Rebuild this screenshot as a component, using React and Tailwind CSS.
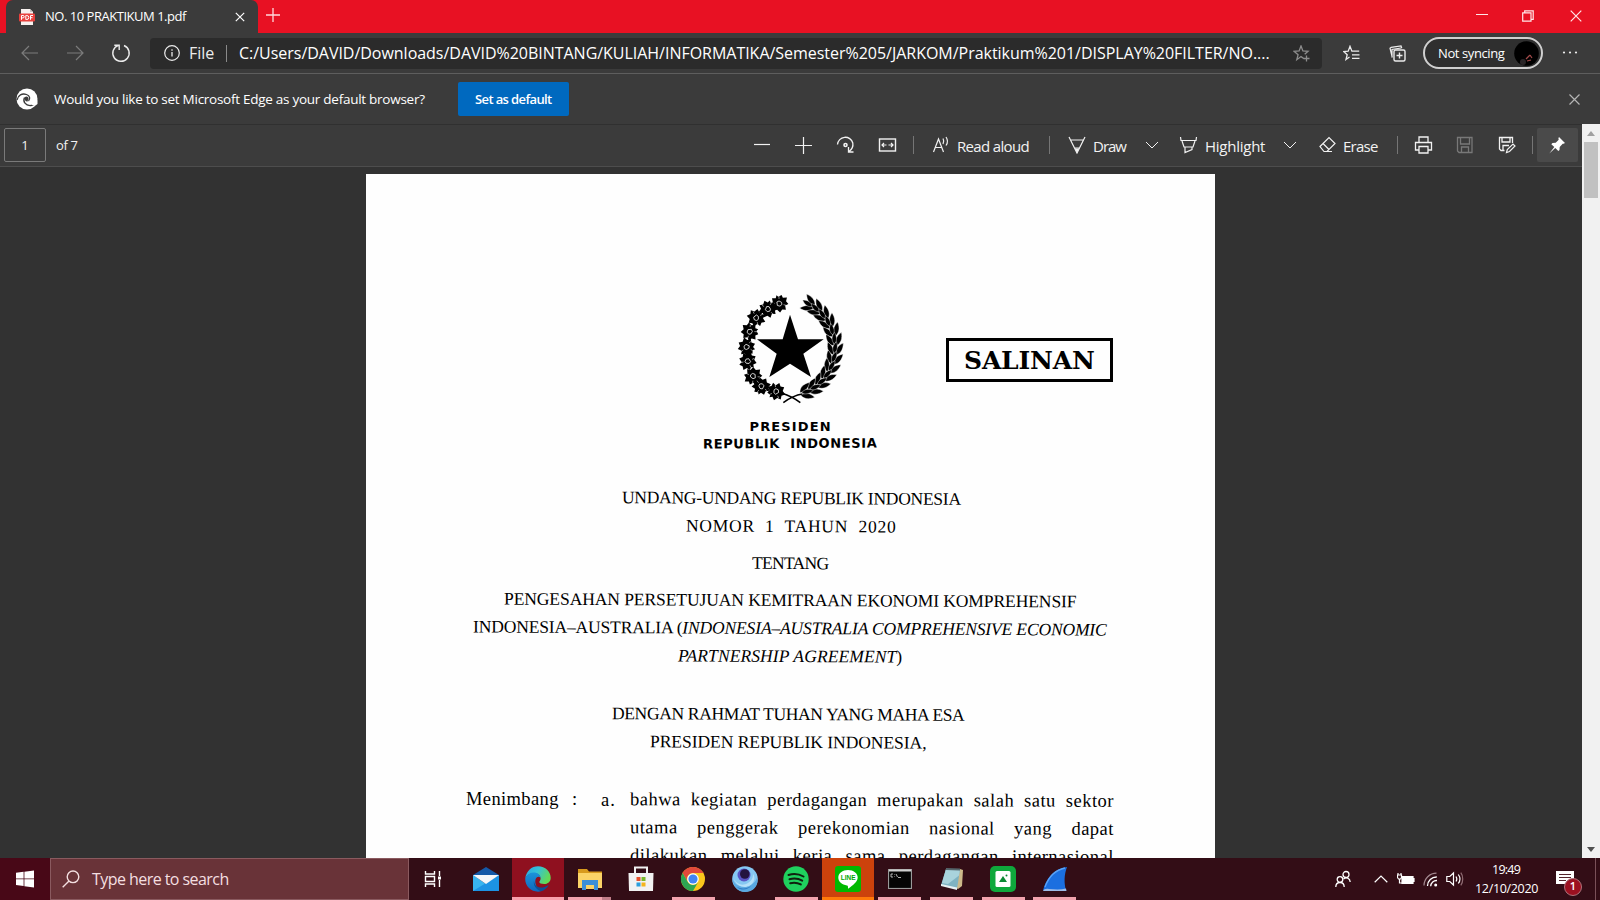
import { useLayoutEffect, useRef, useState } from "react";

const UI = "font-['Open_Sans','Noto_Sans',sans-serif]";
const SERIF = "font-['Liberation_Serif',serif]";

/* One line of text whose letter spacing is adjusted to fill the width of its box. */
function Fit({ className = "", children }) {
  const box = useRef(null);
  const text = useRef(null);
  const [spacing, setSpacing] = useState(0);
  useLayoutEffect(() => {
    const n = text.current.textContent.length;
    setSpacing((box.current.offsetWidth - text.current.offsetWidth) / Math.max(1, n - 1));
  }, []);
  return (
    <div ref={box} className={`shrink-0 whitespace-pre ${className}`}>
      <span ref={text} className="inline-block" style={{ letterSpacing: spacing }}>
        {children}
      </span>
    </div>
  );
}

function Svg({ w, h, className = "", children, box }) {
  return (
    <svg
      width={w}
      height={h}
      viewBox={box || `0 0 ${w} ${h}`}
      fill="none"
      stroke="currentColor"
      strokeWidth="1.2"
      className={`shrink-0 ${className}`}
    >
      {children}
    </svg>
  );
}

function TabStrip() {
  return (
    <div className="flex h-[33px] items-start bg-[#e81123] pl-[6px]">
      <div className="flex h-[33px] w-[252px] items-center rounded-t-[7px] bg-[#3b3b3b] pl-[13px] text-white">
        <Svg w={16} h={18}>
          <path d="M2 1h9l3 3v13H2z" fill="#f7f1ef" stroke="none" />
          <path d="M11 1v3h3" fill="#c9c1bf" stroke="none" />
          <rect x="0" y="5.500" width="16" height="8" rx="1" fill="#e8403c" stroke="none" />
          <path d="M2.500 11.800V7.500h1.500a1.200 1.200 0 0 1 0 2.400H2.500M6.800 7.500v4h1a2 2 0 0 0 0-4zM11.500 11.800V7.500h2.500M11.500 9.700h2" stroke="#fff" strokeWidth="1" />
        </Svg>
        <Fit className={`ml-[10px] w-[141px] text-[13px] ${UI}`}>NO. 10 PRAKTIKUM 1.pdf</Fit>
        <Svg w={10} h={10} className="ml-[49px]">
          <path d="M.8.8l8.400 8.400M9.200.8L.8 9.200" />
        </Svg>
      </div>
      <Svg w={14} h={14} className="ml-[8px] mt-[8px] text-[#ffd9dc]">
        <path d="M7 0v14M0 7h14" strokeWidth="1.300" />
      </Svg>
      <div className="ml-auto flex h-[31px] items-center pr-[18px] text-[#ffe6e8]">
        <Svg w={12} h={12}>
          <path d="M0 4.500h12" strokeWidth="1" />
        </Svg>
        <Svg w={12} h={12} className="ml-[34px]">
          <path d="M.7 2.900h8.300v8.300H.7zM2.700 2.700V.8h8.500v8.500H9.200" />
        </Svg>
        <Svg w={12} h={12} className="ml-[36px]">
          <path d="M.7.700l10.600 10.600M11.300.700L.7 11.300" />
        </Svg>
      </div>
    </div>
  );
}

function AddressRow() {
  return (
    <div className="flex h-[41px] items-center border-b border-[#5e5e5e] bg-[#3b3b3b] text-[#ececec]">
      <Svg w={17} h={16} className="ml-[21px] text-[#7c7c7c]">
        <path d="M17 8H1M8 1L1 8l7 7" />
      </Svg>
      <Svg w={17} h={16} className="ml-[29px] text-[#7c7c7c]">
        <path d="M0 8h16M9 1l7 7-7 7" />
      </Svg>
      <Svg w={20} h={20} className="ml-[27px]">
        <path d="M7.500 2.300A8.200 8.200 0 1 0 13 2.500M3.300 2.300h4.900v4.800" strokeWidth="1.400" />
      </Svg>
      <div className="ml-[19px] flex h-[31px] w-[1172px] items-center rounded-[4px] bg-[#2b2b2b]">
        <Svg w={16} h={16} className="ml-[14px]">
          <circle cx="8" cy="8" r="7.300" />
          <path d="M8 7v4.500M8 4.300v1.400" strokeWidth="1.300" />
        </Svg>
        <Fit className={`ml-[9px] w-[25px] text-[16px] ${UI}`}>File</Fit>
        <div className="ml-[12px] h-[17px] w-px bg-[#8a8a8a]" />
        <Fit className={`ml-[12px] w-[1031px] text-[16px] text-white ${UI}`}>
          C:/Users/DAVID/Downloads/DAVID%20BINTANG/KULIAH/INFORMATIKA/Semester%205/JARKOM/Praktikum%201/DISPLAY%20FILTER/NO....
        </Fit>
        <Svg w={17} h={17} className="ml-[23px] text-[#8d8d8d]">
          <path d="M11.500 14L8 11.600 3.800 14.700l1.300-5L1 6.300l5.100-.3L8 1l1.900 5 5.100.3-3.300 2.900M13.500 10.500v6M10.500 13.500h6" strokeWidth="1.300" />
        </Svg>
      </div>
      <Svg w={17} h={17} className="ml-[21px]">
        <path d="M6.500 11.900L3 14.500l1.200-4.800L.7 6.500l4.500-.3L7 1.300l1.900 4.900h7.300M9 9.800h7.500M9 13.300h7.500" strokeWidth="1.300" />
      </Svg>
      <Svg w={17} h={17} className="ml-[29px]">
        <rect x="5" y="5" width="11" height="11" rx="1.500" strokeWidth="1.400" />
        <path d="M10.500 7.500v6M7.500 10.500h6" strokeWidth="1.400" />
        <path d="M3.300 12.500L1 3.200l1.200-.9L12 .9l.8 2.300M3 12.500V4.500L12 3" />
      </Svg>
      <div className="ml-[17px] flex h-[32px] w-[120px] items-center rounded-full border-2 border-[#d0d0d0] bg-[#2f2f2f]">
        <Fit className={`ml-[13px] w-[67px] pt-px text-[13px] text-white ${UI}`}>Not syncing</Fit>
        <Svg w={25} h={25} className="ml-[9px]">
          <circle cx="12.500" cy="12.500" r="12.300" fill="#000" stroke="none" />
          <circle cx="9" cy="21" r="3" fill="#2a2527" stroke="none" />
          <path d="M12 18l4-4M13 20l4-1M16 14l2 3" stroke="#a34a4a" />
        </Svg>
      </div>
      <Svg w={16} h={4} className="ml-[19px]">
        <g fill="currentColor" stroke="none">
          <circle cx="2" cy="1.500" r="1.100" />
          <circle cx="8" cy="1.500" r="1.100" />
          <circle cx="14" cy="1.500" r="1.100" />
        </g>
      </Svg>
    </div>
  );
}

function InfoBar() {
  return (
    <div className="flex h-[50px] items-center bg-[#3b3b3b] text-white">
      <Svg w={22} h={22} className="ml-[16px]">
        <circle cx="11" cy="11" r="10.500" fill="#fff" stroke="none" />
        <path d="M1 12C2 7 6 5 10.500 6.500 14 7.700 14.500 11 12.500 13" stroke="#3b3b3b" strokeWidth="1.300" />
        <path d="M8.500 9.500c-2 4 1 8.500 6.500 8 2-.2 3.500-.9 5-2" stroke="#3b3b3b" strokeWidth="1.300" />
        <path d="M9 9c1.500-1.500 4 0 3.500 2.300-.2 1.200-1.200 1.200-.8 2.200C9 13.500 7.500 11 9 9z" fill="#3b3b3b" stroke="none" />
        <path d="M14 14.500c3 .8 6 0 7.500-2.500v4l-2 1.500c-2 .5-4.500-.5-5.500-3z" fill="#fff" stroke="none" />
      </Svg>
      <Fit className={`ml-[16px] w-[371px] text-[13.500px] ${UI}`}>Would you like to set Microsoft Edge as your default browser?</Fit>
      <div className="ml-[33px] flex h-[34px] w-[111px] items-center justify-center rounded-[2px] bg-[#0069bf]">
        <Fit className={`w-[77px] pt-px text-[13px] font-semibold ${UI}`}>Set as default</Fit>
      </div>
      <Svg w={11} h={11} className="ml-auto mr-[20px] text-[#b4b4b4]">
        <path d="M.5.500l10 10M10.500.500l-10 10" />
      </Svg>
    </div>
  );
}

function Sep({ className }) {
  return <div className={`h-[18px] w-px shrink-0 bg-[#757575] ${className}`} />;
}

function PdfToolbar() {
  const label = `pt-[2px] text-[15px] ${UI}`;
  return (
    <div className="flex h-[43px] items-center border-b border-t border-b-[#4d4d4d] border-t-[#303030] bg-[#3b3b3b] text-[#f2f2f2]">
      <div className="ml-[4px] flex h-[34px] w-[42px] shrink-0 items-center justify-center rounded-[2px] border border-[#7a7a7a]">
        <span className={`text-[13px] ${UI}`}>1</span>
      </div>
      <Fit className={`ml-[10px] w-[22px] text-[13px] ${UI}`}>of 7</Fit>
      <Svg w={16} h={16} className="ml-[676px]"><path d="M0 7.500h16" /></Svg>
      <Svg w={17} h={17} className="ml-[25px]"><path d="M0 8.500h17M8.500 0v17" /></Svg>
      <Svg w={20} h={18} className="ml-[24px]">
        <path d="M1.500 8.500A7.800 7.800 0 0 1 16.800 7c.5 3-.8 6.200-3.500 8.200M12.500 11v5h5" strokeWidth="1.300" />
        <circle cx="9.500" cy="9" r="1.500" strokeWidth="1.600" />
      </Svg>
      <Svg w={19} h={16} className="ml-[22px]">
        <rect x="1.500" y="2" width="16" height="12" strokeWidth="1.400" />
        <path d="M4 8h4.500M10.500 8H15M6 6L4 8l2 2M13 6l2 2-2 2" />
      </Svg>
      <Sep className="ml-[16px]" />
      <Svg w={18} h={18} className="ml-[18px]">
        <path d="M1.500 16L6.500 3l5 13M3.300 11.500h6.500M11 2.500c1 1.800 1 3.700 0 5.500M14 1c1.800 2.700 1.800 6 0 8.500" />
      </Svg>
      <Fit className={`ml-[7px] w-[73px] ${label}`}>Read aloud</Fit>
      <Sep className="ml-[19px]" />
      <Svg w={18} h={18} className="ml-[18px]">
        <path d="M1 1l1.500 3h13L17 1M2.500 4L9 17l6.500-13M6.500 12h5" strokeWidth="1.200" />
        <path d="M7 12.500h4L9 17z" fill="currentColor" stroke="none" />
      </Svg>
      <Fit className={`ml-[7px] w-[34px] ${label}`}>Draw</Fit>
      <Svg w={14} h={8} className="ml-[18px]"><path d="M1 1l6 6 6-6" strokeWidth="1" /></Svg>
      <Svg w={20} h={18} className="ml-[20px]">
        <path d="M1.500 1l.5 3.500h15L17.500 1M3 5l2 6h9l2-6M6 11.500v5l7-3v-2" strokeWidth="1.200" />
      </Svg>
      <Fit className={`ml-[6px] w-[60px] ${label}`}>Highlight</Fit>
      <Svg w={14} h={8} className="ml-[18px]"><path d="M1 1l6 6 6-6" strokeWidth="1" /></Svg>
      <Svg w={20} h={18} className="ml-[21px]">
        <path d="M2 10.500L11 1.500l6 6-8 8H6zM5 7.500l6 6M6 15.500h8" strokeWidth="1.200" />
      </Svg>
      <Fit className={`ml-[5px] w-[35px] ${label}`}>Erase</Fit>
      <Sep className="ml-[19px]" />
      <Svg w={19} h={18} className="ml-[16px]">
        <path d="M5 6V1h9v5M5 14H1.500V6.500h16V14H14M5 10.500h9V17H5z" strokeWidth="1.300" />
      </Svg>
      <Svg w={18} h={18} className="ml-[23px] text-[#787878]">
        <path d="M1.500 1.500h14.500v15H3l-1.500-1.500zM4.500 1.500V8h9V1.500M5.500 16.500V11h7v5.500" strokeWidth="1.300" />
      </Svg>
      <Svg w={18} h={18} className="ml-[24px]">
        <path d="M6.500 14.500H3L1.500 13V1.500h13V7M4 1.500V6h8V1.500M5 14V9.500h6" strokeWidth="1.300" />
        <path d="M8.500 16.500l.8-3L15 8l2 2-5.500 5.500z" />
      </Svg>
      <Sep className="ml-[16px]" />
      <div className="ml-[4px] flex h-[34px] w-[41px] shrink-0 items-center justify-center rounded-[2px] bg-[#4a4a4a] pr-[2px] text-white">
        <Svg w={18} h={18}>
          <path d="M11 1l6 6-1.500.8-.8-.1-3 3.200-.2 3-1.200 1-3-3-6 5.500 5-6.400-3-2.800L4.500 7l3.200-.3 3-3-.3-1.500z" fill="currentColor" stroke="none" />
        </Svg>
      </div>
    </div>
  );
}

const FLOWERS = [[236, 70], [202, 86], [167, 112], [148, 153], [139, 199], [143, 242], [159, 287], [184, 318], [228, 334]];
const LEAVES = Array.from({ length: 13 }, (_, i) => -64 + i * 11.200);
const LEAF = "M0 17C-11 6-11-9 1-25C10-9 10 6 0 17Z";

function Emblem() {
  return (
    <svg width="110" height="112" viewBox="110 38 330 336" className="ml-[3px] shrink-0" fill="#000">
      <path d="M269 103L293 177H370L309 220L332 290L269 250L207 290L229 220L170 177H247Z" />
      {FLOWERS.map(([x, y], i) => (
        <g key={i} transform={`translate(${x} ${y}) rotate(${i * 31 + 8})`}>
          <path d="M-5-20L4-27L9-19L21-22L20-10L28-3L19 3L23 15L12 16L7 26L-3 19L-15 24L-16 12L-26 7L-19-2L-23-13L-12-15L-11-24Z" />
          <path d="M-7-4l6-4 8 3 2 6-5 6-8-1z" fill="none" stroke="#fff" strokeWidth="2.200" />
          <path d="M-3-22l1 8M22 2l-8-1M-20 2l7-1" stroke="#fff" strokeWidth="1.500" />
        </g>
      ))}
      {LEAVES.map((a, i) => {
        const t = (a * Math.PI) / 180;
        const x = 269 + 135 * Math.cos(t);
        const y = 201 + 143 * Math.sin(t);
        return (
          <g key={i} transform={`translate(${x} ${y}) rotate(${a})`} stroke="#fff" strokeWidth="1.200">
            <path d={LEAF} transform="translate(12 0) rotate(26)" />
            <path d={LEAF} transform="translate(-12 0) rotate(-28)" />
            <path d={LEAF} transform="translate(0 -4) rotate(6) scale(.85)" />
          </g>
        );
      })}
      <path d="M243 338C265 345 285 355 300 367M306 341C285 344 265 355 249 367" fill="none" stroke="#000" strokeWidth="4.500" />
    </svg>
  );
}

function Line({ className, children }) {
  return (
    <div className="flex h-[28px] rotate-[0.28deg] items-center">
      <Fit className={`text-[17.500px] ${SERIF} ${className}`}>{children}</Fit>
    </div>
  );
}

function Para({ children }) {
  return (
    <div className="h-[28px] rotate-[0.2deg] leading-[28px] tracking-[0.5px] [text-align-last:justify]">{children}</div>
  );
}

function Page() {
  return (
    <div className="ml-[366px] mt-[7px] h-[685px] w-[849px] shrink-0 overflow-hidden bg-[#fefefe] text-black">
      <div className="flex pt-[119px]">
        <div className="ml-[337px] flex w-[174px] flex-col items-center">
          <Emblem />
          <Fit className="mt-[13px] h-[17px] w-[81px] text-[13px] font-bold leading-[17px] font-['DejaVu_Sans',sans-serif]">PRESIDEN</Fit>
          <Fit className="h-[17px] w-[174px] rotate-[-0.3deg] text-[13px] font-bold leading-[17px] font-['DejaVu_Sans',sans-serif]">REPUBLIK  INDONESIA</Fit>
        </div>
        <div className="ml-[69px] mt-[45px] flex h-[44px] w-[167px] items-center justify-center border-[3px] border-black">
          <Fit className="w-[131px] pt-[2px] text-[25px] font-bold leading-[30px] font-['DejaVu_Serif',serif]">SALINAN</Fit>
        </div>
      </div>
      <div className="mt-[32px] flex flex-col">
        <Line className="ml-[256px] w-[339px]">UNDANG-UNDANG REPUBLIK INDONESIA</Line>
        <Line className="ml-[320px] w-[210px]">NOMOR  1  TAHUN  2020</Line>
        <div className="h-[9px]" />
        <Line className="ml-[386px] w-[77px]">TENTANG</Line>
        <div className="h-[9px]" />
        <Line className="ml-[138px] w-[573px]">PENGESAHAN PERSETUJUAN KEMITRAAN EKONOMI KOMPREHENSIF</Line>
        <Line className="ml-[107px] w-[634px]">
          INDONESIA–AUSTRALIA (<i>INDONESIA–AUSTRALIA COMPREHENSIVE ECONOMIC</i>
        </Line>
        <Line className="ml-[312px] w-[224px]"><i>PARTNERSHIP AGREEMENT</i>)</Line>
        <div className="h-[30px]" />
        <Line className="ml-[246px] w-[353px]">DENGAN RAHMAT TUHAN YANG MAHA ESA</Line>
        <Line className="ml-[284px] w-[277px]">PRESIDEN REPUBLIK INDONESIA,</Line>
        <div className="h-[30px]" />
        <div className={`flex text-[18.500px] leading-[28px] ${SERIF}`}>
          <Fit className="-mt-px ml-[100px] w-[92px]">Menimbang</Fit>
          <span className="-mt-px ml-[14px] w-[29px]">:</span>
          <span className="w-[29px] tracking-[1px]">a.</span>
          <div className="w-[484px]">
            <Para>bahwa kegiatan perdagangan merupakan salah satu sektor</Para>
            <Para>utama penggerak perekonomian nasional yang dapat</Para>
            <Para>dilakukan melalui kerja sama perdagangan internasional</Para>
          </div>
        </div>
      </div>
    </div>
  );
}

function Viewer() {
  return (
    <div className="flex h-[692px] overflow-hidden bg-[#323232]">
      <Page />
    </div>
  );
}

function Scrollbar() {
  return (
    <div className="flex w-[18px] shrink-0 flex-col items-center bg-[#f1f1f1]">
      <div className="flex h-[18px] items-center">
        <Svg w={8} h={5}><path d="M0 5l4-5 4 5z" fill="#a0a0a0" stroke="none" /></Svg>
      </div>
      <div className="h-[56px] w-[14px] bg-[#c1c1c1]" />
      <div className="mt-auto flex h-[17px] items-center">
        <Svg w={8} h={5}><path d="M0 0l4 5 4-5z" fill="#505050" stroke="none" /></Svg>
      </div>
    </div>
  );
}

function Task({ children, bar = "", cell = "" }) {
  return (
    <div className={`flex h-[42px] w-[51.700px] shrink-0 flex-col items-center ${cell}`}>
      <div className="flex h-[39px] items-center justify-center pt-[2px]">{children}</div>
      <div className={`h-[3px] ${bar}`} />
    </div>
  );
}

function Taskbar() {
  const on = "w-[43px] bg-[#f2a3ae]";
  return (
    <div className="flex h-[42px] bg-[#330d16] text-white">
      <div className="flex w-[50px] items-center bg-[#480817] pl-[16px]">
        <Svg w={18} h={18}>
          <path d="M0 2.800l7.600-1v6.700H0zM8.400 1.700L18 .4v8.100H8.400zM0 9.300h7.600V16L0 15zM8.400 9.300H18v8.300l-9.600-1.400z" fill="#fff" stroke="none" />
        </Svg>
      </div>
      <div className="flex w-[359px] items-center border border-[#8a5a5f] bg-[#693338] text-[#f4dfe0]">
        <Svg w={18} h={18} className="ml-[11px]">
          <circle cx="11" cy="6.800" r="5.800" strokeWidth="1.400" />
          <path d="M7 11l-6.300 6.300" strokeWidth="1.400" />
        </Svg>
        <Fit className={`ml-[12px] w-[137px] text-[16px] ${UI}`}>Type here to search</Fit>
      </div>
      <div className="flex w-[51.500px] items-center pl-[15px]">
        <Svg w={18} h={18}>
          <path d="M1.500 1v3h9V1M1.500 17v-3h9v3M1.500 6.500h9v5h-9zM15.500 1v5M15.500 10v7" strokeWidth="1.400" />
          <path d="M14 6.500h3v3h-3z" fill="#fff" stroke="none" />
        </Svg>
      </div>
      <Task>
        <Svg w={26} h={24}>
          <g stroke="none">
            <path d="M0 8L13 0l13 8v3H0z" fill="#1459a8" />
            <path d="M0 8l13 9 13-9v16H0z" fill="#38b4f0" />
            <path d="M0 24l26-16v16z" fill="#1c93e4" />
            <path d="M0 8h26l-13 9z" fill="#f5f7fa" />
          </g>
        </Svg>
      </Task>
      <Task cell="bg-[#8f101f]" bar="w-full bg-[#f9a0ac]">
        <Svg w={26} h={26}>
          <defs>
            <linearGradient id="ea" x1="0" y1="0" x2="1" y2=".4">
              <stop offset="0" stopColor="#2aa5e0" />
              <stop offset=".5" stopColor="#35c1d8" />
              <stop offset="1" stopColor="#62d958" />
            </linearGradient>
            <linearGradient id="eb" x1="0" y1="0" x2="0" y2="1">
              <stop offset="0" stopColor="#1b93da" />
              <stop offset="1" stopColor="#1066bb" />
            </linearGradient>
          </defs>
          <g stroke="none">
            <path d="M.3 12C1.500 5 6.500.3 13 .3c7.500 0 12.700 5.500 12.700 11.400 0 4-3 6.300-6.600 6.300-3 0-4.800-1-4.800-2 0-.8 1.300-1.300 1.300-3.500C15.600 9.500 13 7 9 7 5 7 2 9 .3 12z" fill="url(#ea)" />
            <path d="M.3 12C2 8.500 5 6.600 8.800 6.600c4 0 6.600 2.300 6.800 5.400-1-1.400-2.500-1.700-3.600-.8-3.500 3-1.500 10.500 4.500 13.800-1 .5-2.200.7-3.500.7C5.500 25.700-.5 19.500.3 12z" fill="url(#eb)" />
            <path d="M9 14.500C9 20 14 23 19.500 21c1.500-.5 3-1.400 4.200-1.700-1.600 3-4.500 5.200-7.700 6C11 23.500 8 19 9 14.500z" fill="#0d4f96" />
          </g>
        </Svg>
      </Task>
      <Task bar="w-[43px] border-r-[9px] border-[#c07d88] bg-[#f2a3ae]">
        <Svg w={24} h={22}>
          <g stroke="none">
            <path d="M0 1h9l2 2.500h13v5H0z" fill="#d89a1d" />
            <path d="M0 5h24v15H0z" fill="#fbd367" />
            <path d="M4 12h16v10h-4v-5H8v5H4z" fill="#3b8fd8" />
            <path d="M8 17h8v4H8z" fill="#fbd367" />
          </g>
        </Svg>
      </Task>
      <Task>
        <Svg w={26} h={28}>
          <path d="M7 10V2.500h12V10" stroke="#f1f1f1" strokeWidth="2" />
          <path d="M.5 8h25l-.5 18H1z" fill="#f2f2f2" stroke="none" />
          <g stroke="none">
            <path d="M8.500 12h4v4h-4z" fill="#e8502c" />
            <path d="M13.500 12h4v4h-4z" fill="#79b92c" />
            <path d="M8.500 17.500h4v4h-4z" fill="#2b9fdd" />
            <path d="M13.500 17.500h4v4h-4z" fill="#f4b51d" />
          </g>
        </Svg>
      </Task>
      <Task bar={on}>
        <Svg w={24} h={24}>
          <g stroke="none">
            <circle cx="12" cy="12" r="12" fill="#fbc61c" />
            <path d="M1.600 6A12 12 0 0 1 22.400 6H12a6 6 0 0 0-5.200 9z" fill="#e2493b" />
            <path d="M1.600 6A12 12 0 0 0 12 24l5.200-9A6 6 0 0 1 6.800 15z" fill="#2da653" />
            <circle cx="12" cy="12" r="5.800" fill="#fff" />
            <circle cx="12" cy="12" r="4.600" fill="#4285f4" />
          </g>
        </Svg>
      </Task>
      <Task>
        <Svg w={26} h={26}>
          <g stroke="none">
            <circle cx="13" cy="13" r="12.800" fill="#86c8f2" />
            <path d="M.5 10c0 8 7 12 15 10 5-1.300 8-4 9.500-8 2 8-4 14-12 14S-.5 18 .5 10z" fill="#5aa9e2" />
            <path d="M2 13c3 6 9 7 14 4 4-2.500 5-5 5-9 3 4 1 9-3 11.500C12 23 4 20 2 13z" fill="#b5e0f9" />
            <path d="M5 21c4 2 10 2 14-1-3 4-10 5-14 1z" fill="#2f7cc4" />
            <circle cx="12" cy="9" r="6.500" fill="#5a55c4" />
            <circle cx="12.800" cy="8" r="4.800" fill="#24143f" />
          </g>
        </Svg>
      </Task>
      <Task bar={on}>
        <Svg w={26} h={26}>
          <circle cx="13" cy="13" r="12.700" fill="#1fd15e" stroke="none" />
          <path d="M5.500 9c5-1.500 10.500-1 15 1.500M6.500 13.200c4.500-1.200 8.800-.8 12.700 1.400M7.200 17.200c3.800-1 7.300-.6 10.600 1.200" stroke="#10210f" strokeWidth="2" strokeLinecap="round" />
        </Svg>
      </Task>
      <Task cell="bg-[#cc420c]" bar="w-full bg-[#ff7a0a]">
        <div className="relative flex">
          <Svg w={26} h={26}>
            <rect width="26" height="26" rx="3" fill="#00b900" stroke="none" />
            <path d="M13 4c5.500 0 9.700 3.300 9.700 7.600 0 4.200-4.500 7.700-9.700 11.200 0-2 .2-3.200-1-3.400C7 18.800 3.300 15.800 3.300 11.600 3.300 7.300 7.500 4 13 4z" fill="#fff" stroke="none" />
          </Svg>
          <span className="absolute left-0 top-[7px] w-[26px] text-center font-['Liberation_Sans',sans-serif] text-[6.500px] font-bold leading-[9px] text-[#00a800]">LINE</span>
        </div>
      </Task>
      <Task bar={on}>
        <Svg w={24} h={20}>
          <rect x=".5" y=".5" width="23" height="19" fill="#050505" stroke="#9a9a9a" />
          <path d="M1 1.500h22" stroke="#d0d0d0" strokeWidth="2" />
          <path d="M5 5H3v3h2M6.500 5.500v.5M6.500 7.500V8M8 5l1.500 3M10 8.500h3" stroke="#dcdcdc" strokeWidth=".8" />
        </Svg>
      </Task>
      <Task bar={on}>
        <Svg w={24} h={24}>
          <g stroke="none">
            <path d="M20 2l3 1-1 16-4 3-4-2z" fill="#cdb98a" />
            <path d="M6 2l14 .5L17 22 1 18z" fill="#7fb3c2" />
            <path d="M6 2l14 .5-1 6L8 17l-6-1z" fill="#a9d3dc" />
            <path d="M1 17l16 3.500V23L1 19z" fill="#e8f1f3" />
            <path d="M6 1l14 .5v2L6 3z" fill="#55656b" />
          </g>
        </Svg>
      </Task>
      <Task bar={on}>
        <Svg w={26} h={26}>
          <rect width="26" height="26" rx="5" fill="#0fa83c" stroke="none" />
          <rect x="5.500" y="5" width="15" height="16" rx="1.500" fill="#fff" stroke="none" />
          <path d="M9 16l4-6 4 6z" fill="#0c8a34" stroke="none" />
          <circle cx="16.500" cy="9.500" r="1" fill="#0c8a34" stroke="none" />
        </Svg>
      </Task>
      <Task bar={on}>
        <Svg w={24} h={24}>
          <path d="M0 23.500C3 12 10 2 24 0c-3 8-3 16-1 23.500z" fill="#1b6fe0" stroke="none" />
          <path d="M2 20C6 9 12 3 22 1" stroke="#5aa2f5" strokeWidth="1.300" />
          <path d="M0 24c1-2 3-2.500 6-2 6 .5 12 .8 17-.5l.5 2.500z" fill="#9ebde8" stroke="none" />
        </Svg>
      </Task>
      <div className="ml-auto flex items-center">
        <Svg w={16} h={18}>
          <circle cx="11" cy="4.500" r="3" strokeWidth="1.300" />
          <circle cx="5" cy="9.500" r="2.800" strokeWidth="1.300" />
          <path d="M.8 17c0-6 8.400-6 8.400 0M8.500 9c2.800-2.500 6.500-.8 6.700 3" strokeWidth="1.300" />
        </Svg>
        <Svg w={14} h={8} className="ml-[23px]"><path d="M.7 7.200L7 1l6.300 6.200" /></Svg>
        <Svg w={18} h={14} className="ml-[9px]">
          <path d="M5 4.500h11v7H5z" fill="#fff" />
          <path d="M16.800 6v4" strokeWidth="1.600" />
          <path d="M1 1v2M4 1v2M.5 3h4v2.500l-1 1.500h-2l-1-1.500zM2.500 7v4H5" />
        </Svg>
        <Svg w={15} h={15} className="ml-[8px]">
          <path d="M1 13.500A12.500 12.500 0 0 1 13.500 1.200" stroke="#a48990" />
          <path d="M4.500 14A9 9 0 0 1 13.800 5M7.700 14.200A6 6 0 0 1 14 8.500" strokeWidth="1.300" />
          <circle cx="12.700" cy="13" r="1.500" fill="#fff" stroke="none" />
        </Svg>
        <Svg w={18} h={16} className="ml-[8px]">
          <path d="M.8 5.500h3L7.500 2v12l-3.700-3.500h-3zM10 5.500c1 1.500 1 3.500 0 5M12.300 3.500c2 2.700 2 6.300 0 9" />
          <path d="M14.800 1.700c2.600 3.500 2.600 9 0 12.600" stroke="#8f6b72" />
        </Svg>
        <div className={`ml-[11px] flex w-[63px] flex-col items-center text-[12.500px] leading-[19px] ${UI}`}>
          <Fit className="w-[29px]">19:49</Fit>
          <Fit className="w-[63px]">12/10/2020</Fit>
        </div>
        <div className="relative ml-[18px] mr-[13px] flex w-[26px] pb-[1px]">
          <Svg w={18} h={18}>
            <path d="M0 1h18v13h-4v4l-4.500-4H0z" fill="#fff" stroke="none" />
            <path d="M3 4.500h12M3 7.500h12M3 10.500h7" stroke="#55242c" />
          </Svg>
          <div className={`absolute left-[8px] top-[8px] flex h-[18px] w-[18px] items-center justify-center rounded-full border border-[#b0737c] bg-[#9c1020] text-[11px] font-semibold ${UI}`}>1</div>
        </div>
        <div className="h-[42px] w-px bg-[#7a5058]" />
        <div className="w-[4px]" />
      </div>
    </div>
  );
}

export default function App() {
  return (
    <div className="flex h-[900px] w-[1600px] flex-col overflow-hidden bg-[#323232]">
      <TabStrip />
      <AddressRow />
      <InfoBar />
      <div className="flex h-[734px]">
        <div className="flex w-[1582px] flex-col">
          <PdfToolbar />
          <Viewer />
        </div>
        <Scrollbar />
      </div>
      <Taskbar />
    </div>
  );
}
